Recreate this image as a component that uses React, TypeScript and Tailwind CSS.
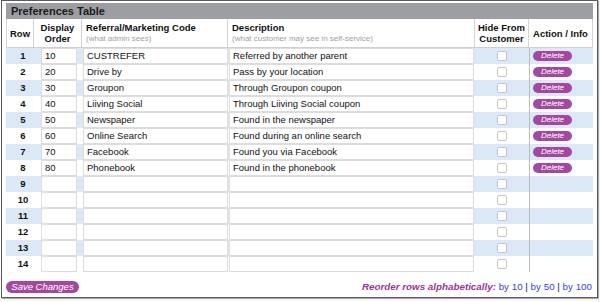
import React from "react";

type Pref = { order: string; code: string; desc: string };

const prefs: Pref[] = [
  { order: "10", code: "CUSTREFER", desc: "Referred by another parent" },
  { order: "20", code: "Drive by", desc: "Pass by your location" },
  { order: "30", code: "Groupon", desc: "Through Groupon coupon" },
  { order: "40", code: "Liiving Social", desc: "Through Liiving Social coupon" },
  { order: "50", code: "Newspaper", desc: "Found in the newspaper" },
  { order: "60", code: "Online Search", desc: "Found during an online search" },
  { order: "70", code: "Facebook", desc: "Found you via Facebook" },
  { order: "80", code: "Phonebook", desc: "Found in the phonebook" },
];

const rows = Array.from({ length: 14 }, (_, i) => prefs[i] ?? null);

function Field({ value }: { value: string }) {
  return (
    <div className="h-[16px] bg-white border border-[#dcdcdc] pl-[3px] text-[9.5px] leading-[14px] text-[#111] overflow-hidden whitespace-nowrap">
      {value}
    </div>
  );
}

export default function App() {
  return (
    <div className="w-[600px] h-[302px] bg-white" style={{ fontFamily: '"Liberation Sans", Arial, sans-serif' }}>
      <div className="ml-[1px] w-[597px] h-[298px] border border-[#5a5a5a] shadow-[1px_1px_1px_#aaa] px-[4px] pt-[2px]">
        {/* Title */}
        <div className="h-[16px] bg-[#9c9ea4] pl-[5px] text-[11px] font-bold leading-[16px] text-[#1a1a1a]">
          Preferences Table
        </div>

        {/* Header */}
        <div className="grid grid-cols-[28px_48px_146px_247px_54px_64px] h-[29px] border-b border-[#cfcfcf] text-[9.5px] font-bold text-[#111] leading-[11px]">
          <div className="flex items-center justify-center border-l border-r border-[#d4d4d4]">Row</div>
          <div className="flex items-center justify-center text-center border-r border-[#d4d4d4]">
            Display
            <br />
            Order
          </div>
          <div className="flex flex-col justify-center pl-[4px] border-r border-[#d4d4d4]">
            <span>Referral/Marketing Code</span>
            <span className="font-normal text-[8px] text-[#a0a0a0]">(what admin sees)</span>
          </div>
          <div className="flex flex-col justify-center pl-[4px] border-r border-[#d4d4d4]">
            <span>Description</span>
            <span className="font-normal text-[8px] text-[#a0a0a0]">(what customer may see in self-service)</span>
          </div>
          <div className="flex items-center justify-center text-center border-r border-[#d4d4d4]">
            Hide From
            <br />
            Customer
          </div>
          <div className="flex items-center justify-center border-r border-[#d4d4d4]">Action / Info</div>
        </div>

        {/* Body */}
        <div>
          {rows.map((r, i) => {
            const odd = i % 2 === 0;
            const bg = odd ? "bg-[#dce8f6]" : "bg-white";
            return (
              <div key={i} className="grid grid-cols-[34px_42px_146px_246px_55px_64px] h-[16px]">
                <div className={`${bg} flex items-center justify-center text-[9.5px] font-bold text-[#111]`}>{i + 1}</div>
                <div className={`${bg} pl-[1px] pr-[5px]`}>
                  <Field value={r ? r.order : ""} />
                </div>
                <div className={`${bg} pl-[1px]`}>
                  <Field value={r ? r.code : ""} />
                </div>
                <div className={`${bg} pl-[1px]`}>
                  <Field value={r ? r.desc : ""} />
                </div>
                <div className={`${bg} flex items-center justify-center`}>
                  <span className="w-[10px] h-[10px] rounded-[2px] border border-[#c4c4c4] bg-white" />
                </div>
                <div className={`${bg} border-l border-[#bdbdbd] flex items-center pl-[3px]`}>
                  {r && (
                    <span className="w-[39px] h-[10px] rounded-full bg-[#a3489e] text-white italic text-[8px] leading-[10px] text-center">
                      Delete
                    </span>
                  )}
                </div>
              </div>
            );
          })}
        </div>

        {/* Footer */}
        <div className="mt-[9px] flex items-center justify-between">
          <span className="w-[73px] h-[12px] rounded-full bg-[#a3489e] text-white italic text-[9.5px] leading-[12px] text-center">
            Save Changes
          </span>
          <div className="text-[9.8px] leading-[12px] pr-[1px]">
            <span className="font-bold italic text-[#9a3596]">Reorder rows alphabetically: </span>
            <span className="text-[#3b3bf0]">by 10</span>
            <span className="text-[#222]"> | </span>
            <span className="text-[#3b3bf0]">by 50</span>
            <span className="text-[#222]"> | </span>
            <span className="text-[#3b3bf0]">by 100</span>
          </div>
        </div>
      </div>
    </div>
  );
}
